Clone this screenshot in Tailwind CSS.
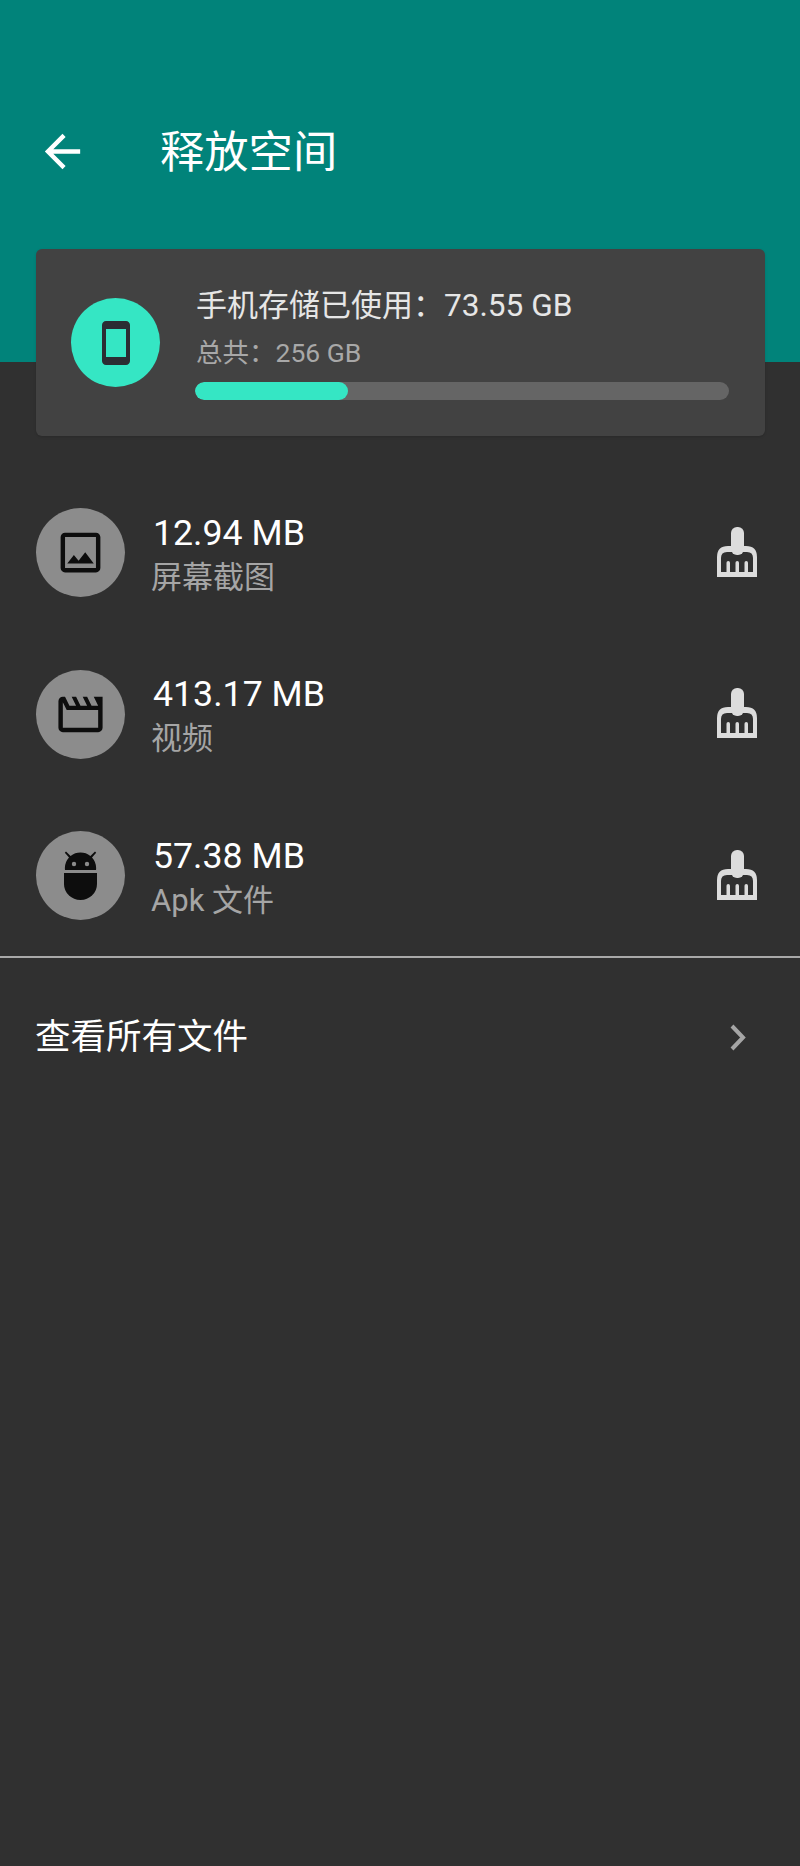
<!DOCTYPE html>
<html lang="zh"><head><meta charset="utf-8"><script src="https://cdn.jsdelivr.net/npm/@tailwindcss/browser@4"></script></head>
<body class="m-0 bg-[#303030]">
<div class="w-[800px] h-[1866px] bg-[#303030] overflow-hidden font-[Roboto,'Noto_Sans_CJK_SC',sans-serif]">
  <header class="h-[362px] bg-[#01837a] pt-[125px] pl-[36px] flex items-start">
    <svg class="w-[53px] h-[53px]" viewBox="0 0 24 24" fill="#fff"><path d="M20 11H7.83l5.59-5.59L12 4l-8 8 8 8 1.41-1.41L7.83 13H20v-2z"/></svg>
    <h1 class="ml-[71px] mt-[2px] text-[44.3px] leading-[53px] text-white font-normal">释放空间</h1>
  </header>
  <section class="relative ml-[36px] mr-[35px] -mt-[113px] h-[187px] rounded-[6px] bg-[#424242] shadow-sm flex items-start pl-[35px] pt-[49px]">
    <div class="w-[89px] h-[89px] rounded-full bg-[#35e6c4] flex items-center justify-center shrink-0">
      <svg class="w-[48px] h-[48px]" viewBox="0 0 24 24" fill="#2b2d33"><path d="M17 1.01L7 1c-1.1 0-2 .9-2 2v18c0 1.1.9 2 2 2h10c1.1 0 2-.9 2-2V3c0-1.1-.9-1.99-2-1.99zM17 19H7V5h10v14z"/></svg>
    </div>
    <div class="ml-[36px] w-[532px] -mt-[14px]">
      <p class="text-[31px] leading-[44px] text-[#e6e6e6]">手机存储已使用：<span class="text-[31.6px]">73.55 GB</span></p>
      <p class="text-[26.5px] leading-[36px] mt-[7px] text-[#a8a8a8]">总共：256 GB</p>
      <div class="mt-[11px] -ml-[1px] w-[534px] h-[18px] rounded-full bg-[#656565] overflow-hidden">
        <div class="h-full w-[153px] rounded-full bg-[#35e6c4]"></div>
      </div>
    </div>
  </section>
  <ul class="mt-[35px] px-[36px]">
    <li class="h-[161.5px] flex items-center">
      <div class="w-[89px] h-[89px] mt-[2px] rounded-full bg-[#8c8c8c] flex items-center justify-center shrink-0">
        <svg class="w-[53px] h-[53px]" viewBox="0 0 24 24" fill="#0d0d0d"><path d="M19 5v14H5V5h14m0-2H5c-1.1 0-2 .9-2 2v14c0 1.1.9 2 2 2h14c1.1 0 2-.9 2-2V5c0-1.1-.9-2-2-2zm-4.86 8.86l-3 3.87L9 13.14 6 17h12l-3.86-5.14z"/></svg>
      </div>
      <div class="ml-[27px] flex-1 mt-[7px]">
        <p class="text-[35.7px] leading-[44px] ml-[1px] text-white">12.94 MB</p>
        <p class="text-[31px] leading-[44px] mt-[1px] -ml-[1px] text-[#a5a5a5]">屏幕截图</p>
      </div>
      <svg class="w-[40px] h-[50px]" viewBox="0 0 40 50" fill="#dcdcdc"><rect x="14" width="13" height="28" rx="6"/><path fill-rule="evenodd" d="M0 50V30Q0 19 11 19H29Q40 19 40 30V50ZM4 45H36V31Q36 25 30 25H10Q4 25 4 31Z"/><rect x="9.5" y="34" width="3.5" height="13" rx="1.75"/><rect x="18.5" y="34" width="3.5" height="13" rx="1.75"/><rect x="27.5" y="34" width="3.5" height="13" rx="1.75"/></svg>
      <div class="w-[7px]"></div>
    </li>
    <li class="h-[161.5px] flex items-center">
      <div class="w-[89px] h-[89px] mt-[2px] rounded-full bg-[#8c8c8c] flex items-center justify-center shrink-0">
        <svg class="w-[53px] h-[53px]" viewBox="0 0 24 24" fill="#0d0d0d"><path d="M4 6.47L5.76 10H20v8H4V6.47M22 4h-4l2 4h-3l-2-4h-2l2 4h-3l-2-4H8l2 4H7L5 4H4c-1.1 0-1.99.9-1.99 2L2 18c0 1.1.9 2 2 2h16c1.1 0 2-.9 2-2V4z"/></svg>
      </div>
      <div class="ml-[27px] flex-1 mt-[7px]">
        <p class="text-[35.7px] leading-[44px] ml-[1px] text-white">413.17 MB</p>
        <p class="text-[31px] leading-[44px] mt-[1px] -ml-[1px] text-[#a5a5a5]">视频</p>
      </div>
      <svg class="w-[40px] h-[50px]" viewBox="0 0 40 50" fill="#dcdcdc"><rect x="14" width="13" height="28" rx="6"/><path fill-rule="evenodd" d="M0 50V30Q0 19 11 19H29Q40 19 40 30V50ZM4 45H36V31Q36 25 30 25H10Q4 25 4 31Z"/><rect x="9.5" y="34" width="3.5" height="13" rx="1.75"/><rect x="18.5" y="34" width="3.5" height="13" rx="1.75"/><rect x="27.5" y="34" width="3.5" height="13" rx="1.75"/></svg>
      <div class="w-[7px]"></div>
    </li>
    <li class="h-[161.5px] flex items-center">
      <div class="w-[89px] h-[89px] mt-[2px] rounded-full bg-[#8c8c8c] flex items-center justify-center shrink-0">
        <svg class="w-[33px] h-[49px]" viewBox="0 0 33 49" fill="#0d0d0d"><path d="M2 0.5L0.8 1.8 5 6.4A16 16 0 0 0 1 19H32A16 16 0 0 0 28 6.4L32.2 1.8 31 0.5 26.4 5A16 16 0 0 0 6.6 5Z"/><path d="M0 22H33V33A16.5 16 0 0 1 0 33Z"/><circle cx="10" cy="13" r="2.2" fill="#8c8c8c"/><circle cx="23" cy="13" r="2.2" fill="#8c8c8c"/></svg>
      </div>
      <div class="ml-[27px] flex-1 mt-[7px]">
        <p class="text-[35.7px] leading-[44px] ml-[1px] text-white">57.38 MB</p>
        <p class="text-[31px] leading-[44px] mt-[1px] -ml-[1px] text-[#a5a5a5]">Apk 文件</p>
      </div>
      <svg class="w-[40px] h-[50px]" viewBox="0 0 40 50" fill="#dcdcdc"><rect x="14" width="13" height="28" rx="6"/><path fill-rule="evenodd" d="M0 50V30Q0 19 11 19H29Q40 19 40 30V50ZM4 45H36V31Q36 25 30 25H10Q4 25 4 31Z"/><rect x="9.5" y="34" width="3.5" height="13" rx="1.75"/><rect x="18.5" y="34" width="3.5" height="13" rx="1.75"/><rect x="27.5" y="34" width="3.5" height="13" rx="1.75"/></svg>
      <div class="w-[7px]"></div>
    </li>
  </ul>
  <div class="h-[2px] bg-[#a8a8a8]"></div>
  <div class="h-[160px] px-[36px] flex items-center justify-between">
    <span class="text-[35.5px] -ml-[1px] -mt-[1px] leading-[50px] text-white">查看所有文件</span>
    <svg class="w-[17px] h-[27px] mr-[17px]" viewBox="0 0 17 27" fill="none" stroke="#a5a5a5" stroke-width="4"><path d="M2 2L13 13.5L2 25"/></svg>
  </div>
</div>
</body></html>
